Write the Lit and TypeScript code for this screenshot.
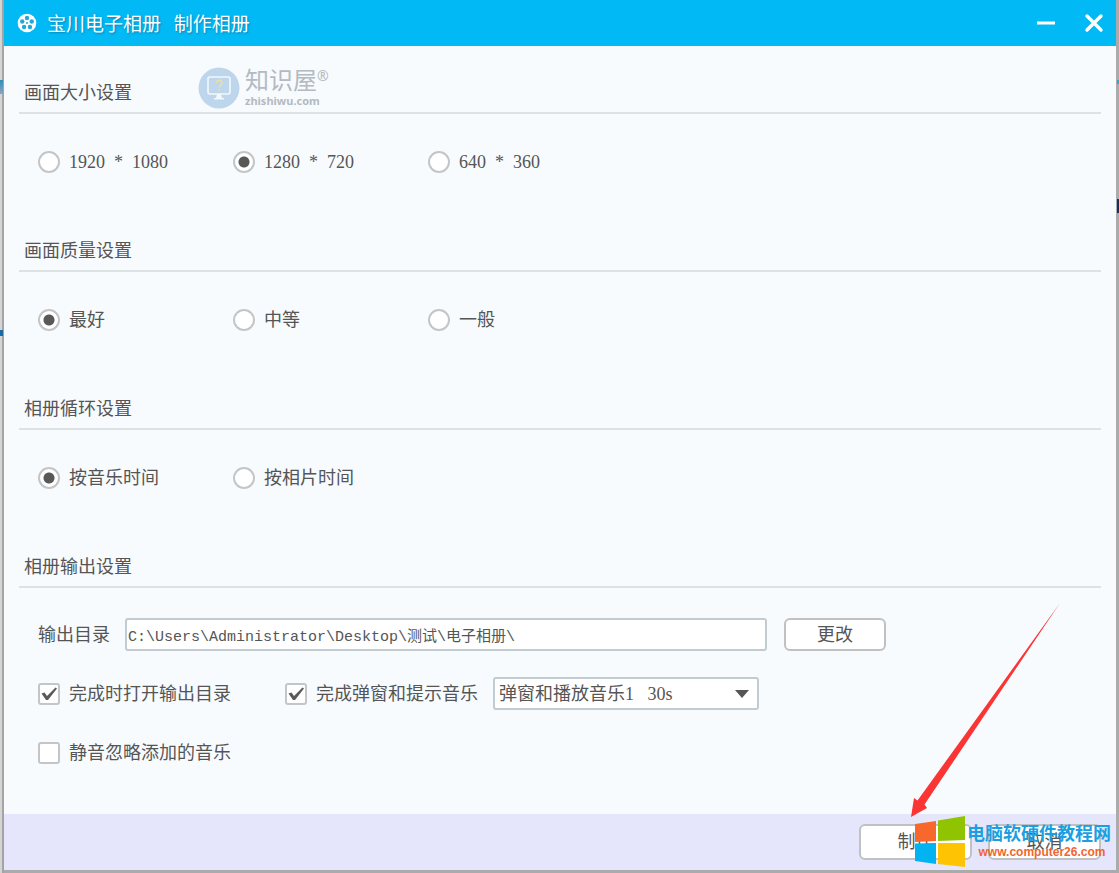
import { LitElement, html, css, svg } from "lit";
import { customElement, property, state } from "lit/decorators.js";

interface Choice {
  value: string;
  label: string;
}

@customElement("radio-section")
class RadioSection extends LitElement {
  @property() heading = "";
  @property() name = "";
  @property() value = "";
  @property({ attribute: false }) choices: Choice[] = [];

  static styles = css`
    :host {
      display: block;
      margin-bottom: 16px;
    }
    .heading {
      margin: 0;
      padding: 14px 5px 7px;
      border-bottom: 2px solid #dde2e4;
      font-size: 18px;
      line-height: 24px;
      font-weight: 400;
    }
    .row {
      display: grid;
      grid-template-columns: repeat(auto-fill, 195px);
      align-items: center;
      height: 95px;
      padding-left: 19px;
    }
    .option {
      display: flex;
      align-items: center;
      gap: 9px;
      white-space: pre;
    }
    .radio {
      appearance: none;
      box-sizing: border-box;
      width: 22px;
      height: 22px;
      margin: 0;
      border: 2px solid #c3c6c8;
      border-radius: 50%;
      background: #fff;
    }
    .radio:checked {
      background: radial-gradient(circle, #585858 5px, #fff 6px);
    }
  `;

  private pick(value: string) {
    this.value = value;
  }

  render() {
    return html`
      <h2 class="heading">${this.heading}</h2>
      <div class="row" role="radiogroup" aria-label=${this.heading}>
        ${this.choices.map(
          (c) => html`<label class="option"
            ><input
              class="radio"
              type="radio"
              name=${this.name}
              .checked=${c.value === this.value}
              @change=${() => this.pick(c.value)}
            /><span>${c.label}</span></label
          >`
        )}
      </div>
    `;
  }
}

@customElement("app-root")
class AppRoot extends LitElement {
  @state() private path = "C:\\Users\\Administrator\\Desktop\\测试\\电子相册\\";

  static styles = css`
    :host {
      display: block;
      position: relative;
      box-sizing: border-box;
      min-height: 100vh;
      padding: 0 3px 3px 4px;
      overflow: hidden;
      color: #555;
      font-family: "Liberation Serif", "Noto Sans CJK SC", sans-serif;
      font-size: 18px;
      line-height: 24px;
      font-weight: 400;
      background:
        linear-gradient(#2d8fb8, #8ea4c0) 0 80px / 3px 14px no-repeat,
        linear-gradient(#1c69a4, #1c69a4) 0 330px / 3px 6px no-repeat,
        linear-gradient(#28aac8, #28aac8) 100% 80px / 2px 4px no-repeat,
        linear-gradient(#1c2f55, #1c2f55) 100% 199px / 2px 14px no-repeat,
        linear-gradient(90deg, #d4d4d4 2px, #a4a4a4 2px, #a4a4a4 4px, #ababab 4px);
    }
    .window {
      display: flex;
      flex-direction: column;
      min-height: calc(100vh - 3px);
      background: #f7fbfe;
    }
    .titlebar {
      display: flex;
      align-items: center;
      height: 46px;
      padding: 0 12px 0 13px;
      background: #01b9f5;
      color: #fff;
    }
    .title {
      flex: 1;
      margin: 0 0 0 10px;
      font-family: "Noto Sans CJK SC", sans-serif;
      font-size: 19px;
      font-weight: 400;
      white-space: pre;
      text-shadow: 1px 1px 2px #0784b4;
    }
    .caption {
      display: flex;
      gap: 28px;
    }
    .caption-btn {
      display: flex;
      padding: 0;
      border: 0;
      background: none;
    }
    .main {
      flex: 1;
      padding: 21px 15px 0;
    }
    .heading {
      margin: 0;
      padding: 14px 5px 7px;
      border-bottom: 2px solid #dde2e4;
      font-size: 18px;
      line-height: 24px;
      font-weight: 400;
    }
    .output {
      display: flex;
      flex-direction: column;
      gap: 26px;
      padding: 30px 19px 44px;
    }
    .line {
      display: flex;
      align-items: center;
      height: 33px;
      white-space: nowrap;
    }
    .path {
      flex: 0 1 642px;
      min-width: 0;
      box-sizing: border-box;
      height: 33px;
      margin: 0 17px 0 15px;
      padding: 0 1px;
      border: 2px solid #c0cbd2;
      border-radius: 3px;
      background: #fff;
      color: inherit;
      font: 15px "Liberation Mono", "Noto Sans CJK SC", monospace;
    }
    .btn {
      box-sizing: border-box;
      width: 113px;
      height: 36px;
      padding: 0;
      border: 2px solid #bfc1c3;
      border-radius: 6px;
      background: #fff;
      color: inherit;
      font: inherit;
    }
    .btn-small {
      width: 102px;
      height: 33px;
    }
    .check {
      display: flex;
      align-items: center;
      gap: 9px;
    }
    .check-first {
      margin-right: 54px;
    }
    .box {
      display: grid;
      width: 22px;
      height: 22px;
    }
    .box > * {
      grid-area: 1 / 1;
    }
    .tick-input {
      appearance: none;
      box-sizing: border-box;
      width: 22px;
      height: 22px;
      margin: 0;
      border: 2px solid #c3c6c8;
      border-radius: 3px;
      background: #fff;
    }
    .tick {
      visibility: hidden;
      pointer-events: none;
    }
    .tick-input:checked + .tick {
      visibility: visible;
    }
    .select-wrap {
      display: grid;
      align-items: center;
      margin-left: 15px;
    }
    .select-wrap > * {
      grid-area: 1 / 1;
    }
    .select {
      appearance: none;
      box-sizing: border-box;
      width: 266px;
      height: 33px;
      padding: 0 4px;
      border: 2px solid #c0cbd2;
      border-radius: 3px;
      background: #fff;
      color: inherit;
      font: inherit;
    }
    .caret {
      justify-self: end;
      margin-right: 9px;
      pointer-events: none;
    }
    .footer {
      display: flex;
      align-items: center;
      justify-content: flex-end;
      gap: 16px;
      height: 56px;
      padding: 0 15px;
      background: #e5e6fb;
    }
    .stamp {
      position: absolute;
      top: 67px;
      left: 198px;
      display: flex;
      gap: 5px;
      color: #b4bac1;
      pointer-events: none;
    }
    .stamp-name {
      display: flex;
      font-size: 24px;
      line-height: 28px;
    }
    .stamp-mark {
      font: 14px/18px "Noto Sans", sans-serif;
    }
    .stamp-site {
      font: 700 11px/12px "Noto Sans", sans-serif;
    }
    .arrow {
      position: absolute;
      right: 54px;
      bottom: 53px;
      pointer-events: none;
    }
    .brand {
      position: absolute;
      right: 8px;
      bottom: 5px;
      display: flex;
      align-items: center;
      gap: 2px;
      pointer-events: none;
      white-space: nowrap;
    }
    .brand-text {
      text-align: center;
    }
    .brand-name {
      color: #1c9fe0;
      font: 700 18px/20px "Noto Sans CJK SC", sans-serif;
    }
    .brand-site {
      padding-left: 6px;
      color: #f2652d;
      font: 700 12px/20px "Liberation Sans", sans-serif;
    }
  `;

  private check(label: string, checked: boolean, extra = "") {
    return html`<label class="check ${extra}">
      <span class="box">
        <input class="tick-input" type="checkbox" .checked=${checked} />
        <svg class="tick" width="22" height="22" viewBox="0 0 22 22">
          <path d="M3.5 10.500 L6.500 9.500 L9 13 L17.500 4.500 L19 5.500 L10 17 L8 17 Z" fill="#5a5a5a" />
        </svg>
      </span>
      <span>${label}</span>
    </label>`;
  }

  private reel() {
    const holes = [0, 1, 2, 3, 4].map((i) => {
      const a = ((i * 72 - 90) * Math.PI) / 180;
      return svg`<circle cx=${10 + 5 * Math.cos(a)} cy=${10 + 5 * Math.sin(a)} r="2.2" fill="#22a9dc" />`;
    });
    return html`<svg width="20" height="20" viewBox="0 0 20 20" aria-hidden="true">
      <circle cx="10" cy="10" r="9.3" fill="#fff" />
      ${holes}
      <circle cx="10" cy="10" r="1" fill="#22a9dc" />
    </svg>`;
  }

  render() {
    return html`
      <div class="window">
        <header class="titlebar">
          ${this.reel()}
          <h1 class="title">宝川电子相册   制作相册</h1>
          <div class="caption">
            <button class="caption-btn" aria-label="最小化">
              <svg width="22" height="22" viewBox="0 0 22 22">
                <path d="M3 11 H21" stroke="#fff" stroke-width="3" />
              </svg>
            </button>
            <button class="caption-btn" aria-label="关闭">
              <svg width="20" height="22" viewBox="0 0 20 22">
                <path d="M3 4 L17 18 M17 4 L3 18" stroke="#fff" stroke-width="3.4" stroke-linecap="round" />
              </svg>
            </button>
          </div>
        </header>

        <main class="main">
          <radio-section
            heading="画面大小设置"
            name="size"
            value="1280"
            .choices=${[
              { value: "1920", label: "1920  *  1080" },
              { value: "1280", label: "1280  *  720" },
              { value: "640", label: "640  *  360" },
            ]}
          ></radio-section>
          <radio-section
            heading="画面质量设置"
            name="quality"
            value="best"
            .choices=${[
              { value: "best", label: "最好" },
              { value: "medium", label: "中等" },
              { value: "normal", label: "一般" },
            ]}
          ></radio-section>
          <radio-section
            heading="相册循环设置"
            name="loop"
            value="music"
            .choices=${[
              { value: "music", label: "按音乐时间" },
              { value: "photo", label: "按相片时间" },
            ]}
          ></radio-section>

          <section>
            <h2 class="heading">相册输出设置</h2>
            <div class="output">
              <div class="line">
                <label for="path">输出目录</label>
                <input id="path" class="path" type="text" .value=${this.path} />
                <button class="btn btn-small">更改</button>
              </div>
              <div class="line">
                ${this.check("完成时打开输出目录", true, "check-first")}
                ${this.check("完成弹窗和提示音乐", true)}
                <div class="select-wrap">
                  <select class="select" aria-label="提示音乐">
                    <option>弹窗和播放音乐1\u00a0\u00a0\u00a030s</option>
                  </select>
                  <svg class="caret" width="16" height="10" viewBox="0 0 16 10">
                    <path d="M1 1 H15 L8 9 Z" fill="#555" />
                  </svg>
                </div>
              </div>
              <div class="line">${this.check("静音忽略添加的音乐", false)}</div>
            </div>
          </section>
        </main>

        <footer class="footer">
          <button class="btn">制作</button>
          <button class="btn">取消</button>
        </footer>
      </div>

      <div class="stamp">
        <svg width="42" height="42" viewBox="0 0 42 42">
          <circle cx="21" cy="21" r="20.5" fill="#bed6eb" />
          <rect x="10" y="10" width="22" height="17" rx="2" fill="none" stroke="#f3f8fc" stroke-width="1.6" />
          <path d="M19 27 H23 L24 31 H26 V32.5 H16 V31 H18 Z" fill="#f3f8fc" />
          <path d="M18.500 16 a2.700 2.700 0 1 1 4.200 2.100 q-1.400 1 -1.400 2.600 M21.300 22.300 v1.600" fill="none" stroke="#ecdfa6" stroke-width="1.6" />
        </svg>
        <div>
          <div class="stamp-name">知识屋<span class="stamp-mark">®</span></div>
          <div class="stamp-site">zhishiwu.com</div>
        </div>
      </div>

      <svg class="arrow" width="160" height="220" viewBox="905 600 160 220" aria-hidden="true">
        <path d="M911 817 L914 798 L917.5 800.5 L1060 603 L924.5 804.5 L927 808 Z" fill="#fb3434" />
      </svg>

      <div class="brand">
        <svg width="50" height="52" viewBox="915 816 50 52" aria-hidden="true">
          <path d="M915 824 L936 821 V841 L915 842 Z" fill="#f8682c" />
          <path d="M938 820.5 L965 816 V840 L938 841 Z" fill="#90c400" />
          <path d="M915 843.5 L936 843 V864 L915 861 Z" fill="#02b3f2" />
          <path d="M938 843 H965 V867 L938 864 Z" fill="#fec302" />
        </svg>
        <div class="brand-text">
          <div class="brand-name">电脑软硬件教程网</div>
          <div class="brand-site">www.computer26.com</div>
        </div>
      </div>
    `;
  }
}
